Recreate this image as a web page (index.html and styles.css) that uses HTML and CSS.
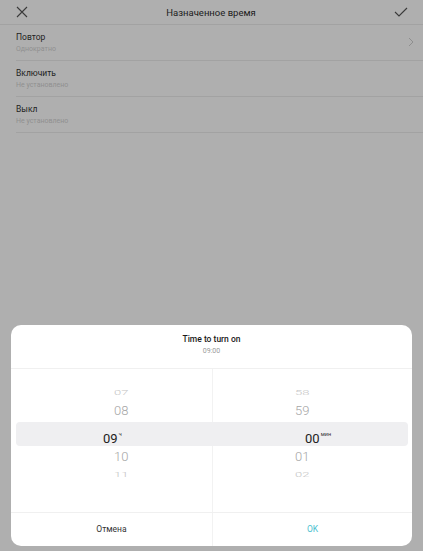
FILE: index.html
```html
<!DOCTYPE html>
<html lang="ru">
<head>
    <meta charset="UTF-8" />
    <meta name="viewport" content="width=device-width, initial-scale=1.0" />
    <title>Назначенное время</title>
    <link rel="stylesheet" href="styles.css">
</head>
<body>
    <div class="page">
        <div class="topbar">
            <svg class="icon" width="12" height="12" viewBox="0 0 12 12"><path d="M1 1L11 11M11 1L1 11" stroke="#3a3a3a" stroke-width="1.1" fill="none"/></svg>
            <div class="topbar-title">Назначенное время</div>
            <svg class="icon" width="14" height="12" viewBox="0 0 14 12"><path d="M1 6L5 10L13 2" stroke="#3a3a3a" stroke-width="1.1" fill="none"/></svg>
        </div>

        <div class="row">
            <div class="row-text">
                <div class="row-title">Повтор</div>
                <div class="row-sub">Однократно</div>
            </div>
            <svg class="chevron" width="6" height="10" viewBox="0 0 6 10"><path d="M1 1L5 5L1 9" stroke="#8e8e8e" stroke-width="1" fill="none"/></svg>
        </div>
        <div class="row">
            <div class="row-text">
                <div class="row-title">Включить</div>
                <div class="row-sub">Не установлено</div>
            </div>
        </div>
        <div class="row">
            <div class="row-text">
                <div class="row-title">Выкл</div>
                <div class="row-sub">Не установлено</div>
            </div>
        </div>
    </div>

    <!-- time picker dialog over the dimmed page -->
    <div class="dialog">
        <div class="dialog-head">
            <div class="dialog-title">Time to turn on</div>
            <div class="dialog-sub">09:00</div>
        </div>

        <div class="picker">
            <div class="band">
                <div class="band-cell band-left">09<span class="unit">ч</span></div>
                <div class="band-cell band-right">00<span class="unit">мин</span></div>
            </div>
            <div class="wheel">
                <div class="item far">07</div>
                <div class="item">08</div>
                <div class="item current"></div>
                <div class="item">10</div>
                <div class="item far">11</div>
            </div>
            <div class="wheel">
                <div class="item far">58</div>
                <div class="item">59</div>
                <div class="item current"></div>
                <div class="item">01</div>
                <div class="item far">02</div>
            </div>
        </div>

        <div class="dialog-foot">
            <button class="btn">Отмена</button>
            <button class="btn btn-ok">OK</button>
        </div>
    </div>
</body>
</html>
```

FILE: styles.css
```css
body {
    margin: 0;
    background-color: #afafaf;
    font-family: Roboto, "Noto Sans", sans-serif;
    height: 551px;
    overflow: hidden;
    position: relative;
}
.topbar {
    height: 24px;
    display: flex;
    align-items: center;
    justify-content: space-between;
    padding: 0 15px 0 16px;
    border-bottom: 1px solid #a2a2a2;
}
.icon {
    display: block;
}
.topbar-title {
    font-size: 9.5px;
    color: #1c1c1c;
}
.row {
    height: 35px;
    margin-left: 16px;
    padding-right: 9px;
    border-bottom: 1px solid #a2a2a2;
    display: flex;
    align-items: center;
    justify-content: space-between;
}
.row-text {
    align-self: flex-start;
    padding-top: 6px;
}
.row-title {
    font-size: 8.5px;
    color: #1e1e1e;
    line-height: 12px;
}
.row-sub {
    font-size: 7px;
    color: #8f8f8f;
    line-height: 12px;
}
.chevron {
    margin-top: -2px;
}
.dialog {
    position: absolute;
    left: 11px;
    top: 325px;
    width: 401px;
    height: 221px;
    background-color: #ffffff;
    border-radius: 10px;
    display: flex;
    flex-direction: column;
    overflow: hidden;
}
.dialog-head {
    height: 44px;
    border-bottom: 1px solid #f0f0f0;
    display: flex;
    flex-direction: column;
    align-items: center;
    padding-top: 9px;
    box-sizing: border-box;
}
.dialog-title {
    font-size: 8.5px;
    font-weight: 500;
    color: #1a1a1a;
    line-height: 11px;
}
.dialog-sub {
    font-size: 7px;
    color: #9a9a9a;
    line-height: 11px;
    margin-top: 1px;
}
.picker {
    height: 143px;
    position: relative;
    display: grid;
    grid-template-columns: 1fr 1fr;
    padding: 0 20px;
}
.wheel {
    display: flex;
    flex-direction: column;
    align-items: center;
    padding-top: 15px;
}
.wheel + .wheel {
    border-left: 1px solid #f2f2f2;
}
.item {
    font-size: 13px;
    font-weight: 300;
    color: #a6a6a6;
    height: 18px;
    line-height: 18px;
}
.item.current {
    height: 28px;
}
.item.far {
    color: #c4c4c4;
    transform: scaleY(0.6);
}
.band {
    position: absolute;
    left: 5px;
    right: 4px;
    top: 53px;
    height: 24px;
    background-color: #efeff1;
    border-radius: 4px;
    display: grid;
    grid-template-columns: 196px 1fr;
    z-index: 1;
}
.band-cell {
    font-size: 13px;
    color: #222222;
    line-height: 24px;
}
.band-left {
    padding-left: 87px;
}
.band-right {
    padding-left: 93px;
}
.unit {
    font-size: 5.5px;
    color: #333333;
    vertical-align: 7px;
    margin-left: 1px;
}
.dialog-foot {
    flex: 1;
    display: grid;
    grid-template-columns: 201px 1fr;
    border-top: 1px solid #f0f0f0;
}
.btn {
    border: none;
    background: none;
    font-family: inherit;
    font-size: 8.5px;
    color: #333333;
    padding: 0 0 2px;
}
.btn-ok {
    border-left: 1px solid #f2f2f2;
    color: #4cc1cf;
}
```
